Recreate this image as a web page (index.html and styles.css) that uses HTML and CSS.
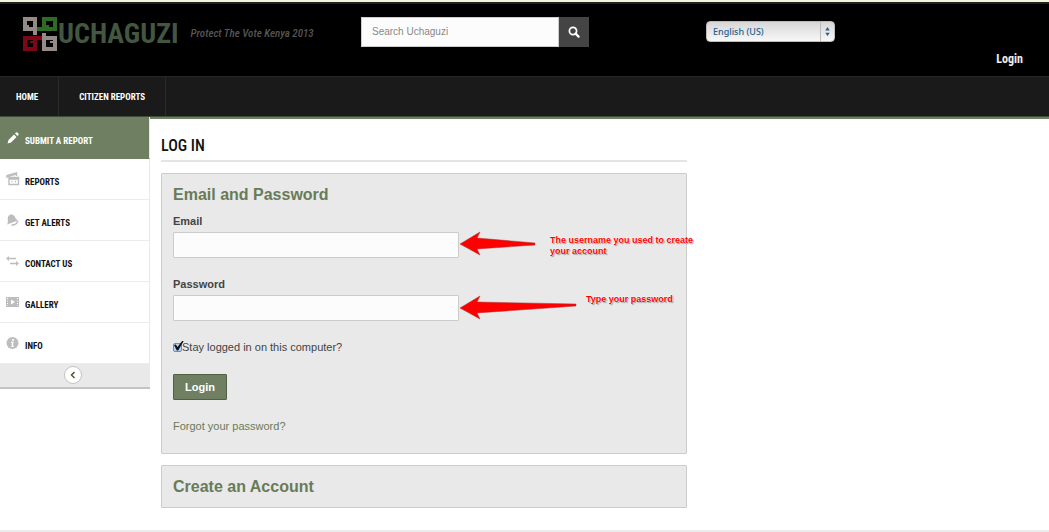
FILE: index.html
```html
<!DOCTYPE html>
<html lang="en">
<head>
    <meta charset="UTF-8">
    <meta name="viewport" content="width=device-width, initial-scale=1.0">
    <title>Uchaguzi - Log In</title>
    <link rel="stylesheet" href="styles.css">
</head>
<body>
    <header class="header">
        <div class="brand">
            <svg class="brand-mark" viewBox="0 0 34 34" width="34" height="34" fill="none" stroke-width="4" aria-hidden="true">
                <g stroke="#948b89" fill="none">
                    <path d="M12 18V2H2v10h10"/>
                    <path d="M21 16v16h11V21H21"/>
                    <path d="M4 9h2M27 25h3" stroke-width="2"/>
                </g>
                <g stroke="#2f6b25">
                    <path d="M14 12h18V2H21v10"/>
                    <path d="M23 9h3" stroke-width="2"/>
                </g>
                <g stroke="#7d0715">
                    <path d="M19 21H2v11h10V21"/>
                    <path d="M7 25h3" stroke-width="2"/>
                </g>
            </svg>
            <span class="brand-name">UCHAGUZI</span>
            <span class="tagline">Protect The Vote Kenya 2013</span>
        </div>
        <form class="search">
            <input type="text" class="search-input" placeholder="Search Uchaguzi" aria-label="Search Uchaguzi">
            <button type="submit" class="search-btn" aria-label="Search">
                <svg viewBox="0 0 12 12" width="12" height="12" fill="none" stroke="#fff">
                    <circle cx="5" cy="5" r="3.6" stroke-width="1.7"/>
                    <path d="M7.6 7.6l3 3" stroke-width="2.2" stroke-linecap="round"/>
                </svg>
            </button>
        </form>
        <div class="language">
            <select class="language-select" aria-label="Language">
                <option>English (US)</option>
            </select>
            <svg class="language-arrows" viewBox="0 0 6 8" width="6" height="8" fill="#27608c" aria-hidden="true">
                <path d="M3 0l2 3H1zM3 8L1 5h4z"/>
            </svg>
        </div>
        <a href="#" class="header-login">Login</a>
    </header>

    <nav class="main-nav">
        <a href="#">HOME</a>
        <a href="#">CITIZEN REPORTS</a>
    </nav>

    <div class="page">
        <aside class="sidebar">
            <a href="#" class="side-link active">
                <svg viewBox="0 0 14 14" width="14" height="14" fill="#fff"><path d="M1.500 12.500l1-3.500L8 3.500 10.500 6 5 11.500zM9 2.500l1-1q1-.5 2 .5t.5 2l-1 1z"/></svg>
                SUBMIT A REPORT
            </a>
            <a href="#" class="side-link">
                <svg viewBox="0 0 14 14" width="14" height="14" fill="none" stroke="#bdbdbd" stroke-width="1.4"><path d="M1 6V3.500L10.500 1v3M3 5.500h9.500v7H3zM1 4.500l9.500-2.500M3 7h9.500M5.500 9.500h1M9 9.500h1"/></svg>
                REPORTS
            </a>
            <a href="#" class="side-link">
                <svg viewBox="0 0 14 14" width="14" height="14" fill="#bdbdbd"><path d="M1 11.500C3 9 .8 5 2.500 3 4.500.6 8 1.300 9 4c.5 1.500 1 2.500 3.500 3.300z"/><path d="M5.500 12c3 .2 5.500-1.500 6-3.800" fill="none" stroke="#bdbdbd" stroke-width="1.600"/></svg>
                GET ALERTS
            </a>
            <a href="#" class="side-link">
                <svg viewBox="0 0 14 14" width="14" height="14" fill="#bdbdbd"><path d="M0 4.500L3 2v1.700h7v1.600H3V7zM13 9.500L10 7v1.700H4v1.600h6V12z"/></svg>
                CONTACT US
            </a>
            <a href="#" class="side-link">
                <svg viewBox="0 0 14 14" width="14" height="14"><path d="M0 2h13v10H0z" fill="#bdbdbd"/><path d="M5 4.500v5l4-2.500z" fill="#fff"/><path d="M1.500 3v8M11.500 3v8" stroke="#fff" stroke-dasharray="1 1.500"/></svg>
                GALLERY
            </a>
            <a href="#" class="side-link">
                <svg viewBox="0 0 14 14" width="14" height="14"><circle cx="6.500" cy="7" r="6" fill="#bdbdbd"/><circle cx="7" cy="4" r="1.100" fill="#fff"/><path d="M5 6.400h1.800l-.7 4h1.600" fill="none" stroke="#fff" stroke-width="1.300"/></svg>
                INFO
            </a>
            <div class="sidebar-foot">
                <button type="button" class="collapse-btn" aria-label="Collapse menu">
                    <svg viewBox="0 0 6 8" width="6" height="8" fill="none" stroke="#46583b" stroke-width="1.500"><path d="M4.500 1L1.500 4l3 3"/></svg>
                </button>
            </div>
        </aside>

        <main class="content">
            <h1>LOG IN</h1>

            <section class="panel">
                <h2>Email and Password</h2>
                <form class="login-form">
                    <div class="field">
                        <label for="email">Email</label>
                        <input type="text" id="email" class="text-input">
                        <div class="hint">
                            <svg viewBox="0 0 78 26" width="78" height="26" fill="#f00" stroke="#a33" stroke-width=".5" aria-hidden="true"><path d="M1 13L21 1l-3 6 58 5v2l-58 4 3 6z"/></svg>
                            <p class="hint-email">The username you used to create your account</p>
                        </div>
                    </div>
                    <div class="field">
                        <label for="password">Password</label>
                        <input type="password" id="password" class="text-input">
                        <div class="hint">
                            <svg viewBox="0 0 118 26" width="118" height="26" fill="#f00" stroke="#a33" stroke-width=".5" aria-hidden="true"><path d="M1 14L21 2l-3 6 99 2v2L18 19l3 6z"/></svg>
                            <p class="hint-password">Type your password</p>
                        </div>
                    </div>
                    <div class="remember">
                        <input type="checkbox" id="remember" checked>
                        <label for="remember">Stay logged in on this computer?</label>
                    </div>
                    <button type="submit" class="login-btn">Login</button>
                </form>
                <a href="#" class="forgot">Forgot your password?</a>
            </section>

            <section class="panel">
                <h2>Create an Account</h2>
            </section>
        </main>
    </div>

    <footer class="footer"></footer>
</body>
</html>
```

FILE: styles.css
```css
* {
    box-sizing: border-box;
}
body {
    margin: 0;
    border-top: 2px solid #f5f5dc;
    font-family: "Liberation Sans", Arial, sans-serif;
    font-size: 11px;
    line-height: 14px;
    color: #444;
    background: #fff;
}
h1, h2, p {
    margin: 0;
}
a {
    text-decoration: none;
}
svg {
    display: block;
    flex: none;
}
button, input, select {
    font: inherit;
    margin: 0;
}
.brand-name, .tagline, .header-login, .main-nav, .side-link, h1 {
    font-family: "Roboto Condensed", "Liberation Sans Narrow", Roboto, sans-serif;
}

/* header */
.header {
    display: grid;
    grid-template-columns: 338px 345px 1fr auto;
    align-items: start;
    height: 74px;
    padding: 13px 26px 0 23px;
    background: #000;
    border-top: 2px solid #222;
}
.brand {
    display: flex;
    align-items: center;
    height: 34px;
}
.brand-name {
    margin-left: 1px;
    font-size: 28px;
    line-height: 34px;
    font-weight: bold;
    color: #435640;
}
.tagline {
    margin-left: 12px;
    font-size: 11px;
    font-style: italic;
    font-weight: 500;
    color: #555;
    white-space: nowrap;
}
.search {
    display: flex;
    width: 228px;
    height: 30px;
}
.search-input {
    flex: 1;
    min-width: 0;
    padding: 0 10px;
    border: 1px solid #ccc;
    border-radius: 0;
    background: #fcfcfc;
    font-size: 10px;
}
.search-input::placeholder {
    color: #888;
}
.search-btn {
    display: flex;
    align-items: center;
    justify-content: center;
    width: 30px;
    padding: 0;
    border: 0;
    background: #444;
}
.language {
    position: relative;
    width: 129px;
    margin-top: 4px;
}
.language-select {
    appearance: none;
    display: block;
    width: 100%;
    height: 21px;
    padding: 0 20px 0 6px;
    border: 1px solid #bbb;
    border-radius: 4px;
    background: linear-gradient(#d6d6d6, #f8f8f8);
    font-family: "Noto Sans", sans-serif;
    font-size: 9px;
    font-weight: 500;
    color: #27608c;
}
.language-arrows {
    position: absolute;
    top: 1px;
    right: 1px;
    width: 14px;
    height: 19px;
    padding: 5px 3px;
    border-left: 1px solid #bbb;
}
.header-login {
    align-self: end;
    padding-bottom: 9px;
    font-size: 12px;
    line-height: 16px;
    font-weight: bold;
    color: #eee;
}

/* top navigation */
.main-nav {
    display: flex;
    height: 41px;
    background: #1a1a1a;
    border-top: 1px solid #262626;
    border-bottom: 1px solid #414b39;
}
.main-nav a {
    padding: 0 20px;
    border-right: 1px solid #2b2b2b;
    font-size: 9px;
    line-height: 40px;
    font-weight: bold;
    color: #fff;
}
.main-nav a:first-child {
    padding-left: 16px;
}

/* sidebar */
.page {
    display: flex;
    align-items: flex-start;
}
.sidebar {
    flex: none;
    width: 150px;
}
.side-link {
    display: flex;
    gap: 5px;
    height: 41px;
    padding: 13px 0 0 6px;
    border-right: 1px solid #e8e8e8;
    border-bottom: 1px solid #ececec;
    font-size: 9px;
    line-height: 20px;
    font-weight: bold;
    color: #111;
}
.side-link.active {
    height: 42px;
    padding-top: 14px;
    background: #6f7f62;
    border-bottom-color: #6f7f62;
    color: #fff;
}
.sidebar-foot {
    display: flex;
    justify-content: center;
    padding: 2px 4px 3px 0;
    background: #e9e9e9;
    border-bottom: 2px solid #c4c4c4;
}
.collapse-btn {
    display: flex;
    align-items: center;
    justify-content: center;
    width: 18px;
    height: 18px;
    padding: 0;
    border: 1px solid #c4c4c4;
    border-radius: 50%;
    background: #fff;
}

/* content */
.content {
    flex: 1;
    padding: 17px 11px 22px;
    border-top: 2px solid #6f7f62;
}
h1 {
    max-width: 526px;
    padding-bottom: 4px;
    border-bottom: 2px solid #e4e4e4;
    font-size: 16px;
    line-height: 20px;
    font-weight: 500;
    color: #111;
}
.panel {
    max-width: 526px;
    margin-top: 11px;
    padding: 11px 11px 10px;
    border: 1px solid #ccc;
    border-radius: 1px;
    background: #e9e9e9;
}
h2 {
    font-size: 16px;
    line-height: 20px;
    color: #687b59;
}
.login-form {
    padding-top: 9px;
}
.field {
    position: relative;
    width: 286px;
    margin-bottom: 19px;
}
.field label {
    display: block;
    margin-bottom: 4px;
    font-weight: bold;
}
.text-input {
    display: block;
    width: 100%;
    height: 26px;
    padding: 0 6px;
    border: 1px solid #ccc;
    border-radius: 1px;
    background: #fcfcfc;
}
.hint {
    position: absolute;
    left: 100%;
    bottom: 1px;
    display: flex;
    align-items: flex-start;
    font-size: 9px;
    line-height: 11px;
    font-weight: bold;
    color: #f00;
    text-shadow: 0 0 1px #fff, 0 0 2px #fff, 1px 1px 1px #888;
}
.hint-email {
    width: 150px;
    margin-left: 13px;
    padding-top: 4px;
}
.hint-password {
    margin-left: 9px;
    white-space: nowrap;
}
.remember {
    display: flex;
    align-items: center;
}
.remember input {
    appearance: none;
    position: relative;
    width: 9px;
    height: 9px;
    border: 1px solid #6d8db5;
    border-radius: 2px;
    background: #b4d5f7;
}
.remember input:checked::after {
    content: "";
    position: absolute;
    left: 0;
    top: -3px;
    width: 10px;
    height: 10px;
    background: #111;
    clip-path: polygon(0 45%, 18% 40%, 35% 65%, 85% 0, 100% 0, 42% 100%, 28% 100%);
}
.login-btn {
    display: block;
    height: 26px;
    margin: 20px 0 19px;
    padding: 0 11px;
    border: 1px solid #4f6044;
    border-radius: 1px;
    background: #6f7f62;
    font-weight: bold;
    color: #fff;
}
.forgot {
    display: block;
    margin-bottom: 10px;
    color: #687b59;
}
.footer {
    border-top: 2px solid #ececec;
}
```
